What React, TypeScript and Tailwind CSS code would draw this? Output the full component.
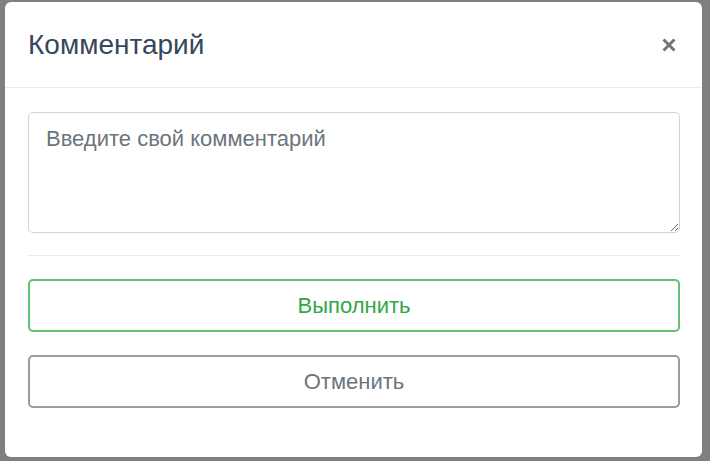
import React, { useState } from 'react';

const CommentModal: React.FC = () => {
    const [comment, setComment] = useState('');

    return (
        <div className="w-[697px] h-[455px] ml-[5px] mt-[2px] bg-white rounded-[6px] flex flex-col">
            {/* Header */}
            <div className="h-[86px] px-[23px] flex items-center justify-between border-b border-[#e9ecef]">
                <h5 className="text-[28px] text-[#37475a] leading-none">Комментарий</h5>
                <button className="w-[14px] h-[14px] mr-[3px] text-[#757575]" aria-label="Закрыть">
                    <svg viewBox="0 0 14 14" width="14" height="14">
                        <path d="M1.5 1.5 L12.5 12.5 M12.5 1.5 L1.5 12.5" stroke="currentColor" strokeWidth="3" />
                    </svg>
                </button>
            </div>

            {/* Body */}
            <div className="pt-[24px] pl-[23px] pr-[22px] flex flex-col">
                <textarea
                    value={comment}
                    onChange={(e) => setComment(e.target.value)}
                    placeholder="Введите свой комментарий"
                    className="h-[121px] w-full px-[17px] py-[11px] border border-[#ced4da] rounded-[5px] text-[22px] text-[#495057] placeholder:text-[#6c757d] leading-[1.4] outline-none"
                />
                <div className="h-px bg-[#e9ecef] mt-[22px]" />
                <button className="mt-[23px] h-[53px] w-full border-2 border-[#62c274] rounded-[5px] text-[22px] text-[#2fa845]">
                    Выполнить
                </button>
                <button className="mt-[23px] h-[53px] w-full border-2 border-[#979da3] rounded-[5px] text-[22px] text-[#6c757d]">
                    Отменить
                </button>
            </div>
        </div>
    );
};

export default function App() {
    return (
        <div className="w-[710px] h-[461px] bg-[#7f7f7f] overflow-hidden font-['Liberation_Sans',Arial,sans-serif]">
            <CommentModal />
        </div>
    );
}
